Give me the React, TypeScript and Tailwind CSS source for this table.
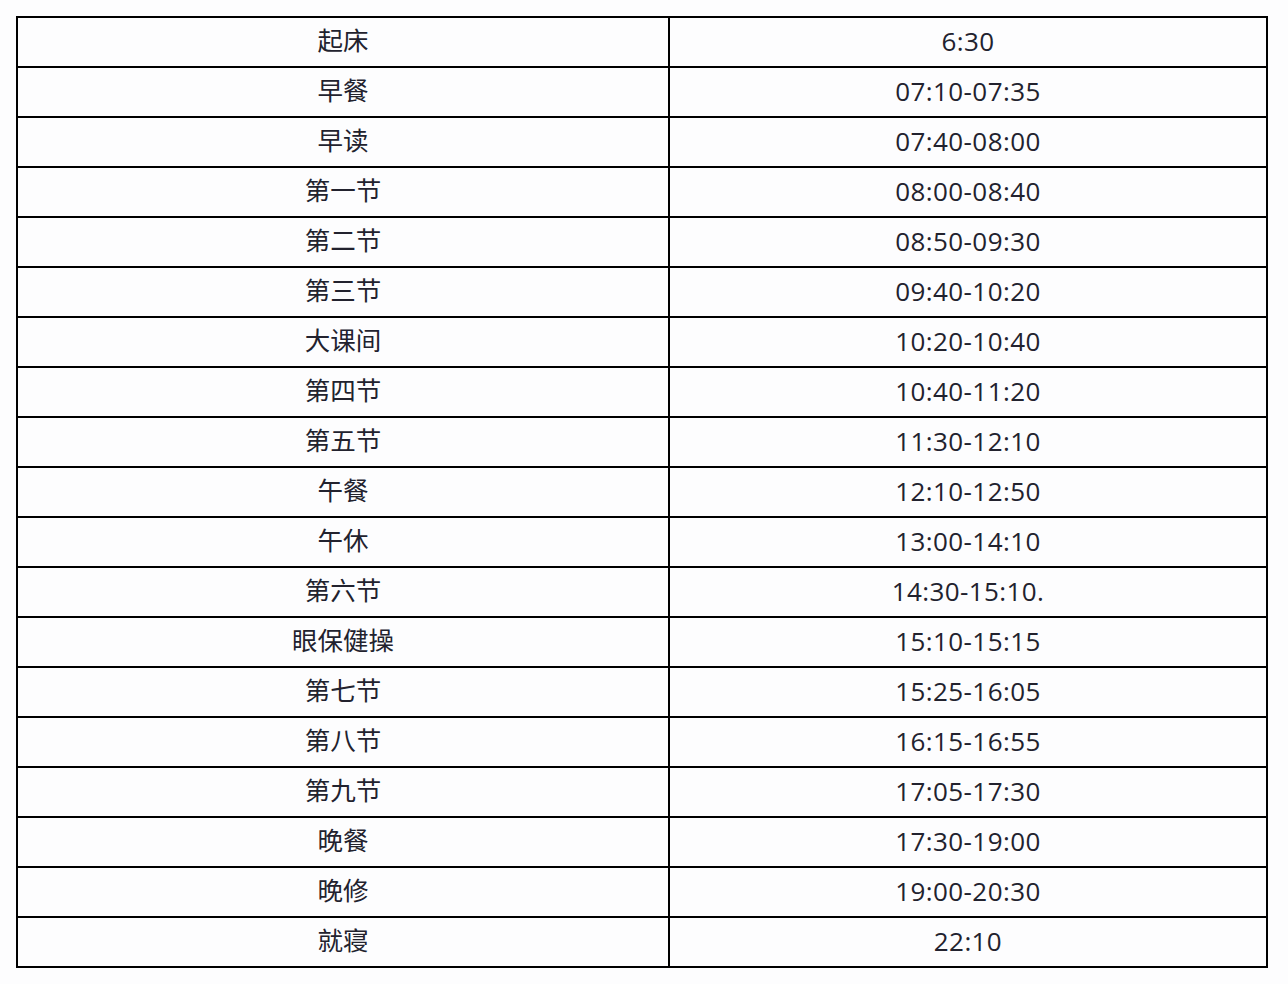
const rows: [string, string][] = [
  ["起床", "6:30"],
  ["早餐", "07:10-07:35"],
  ["早读", "07:40-08:00"],
  ["第一节", "08:00-08:40"],
  ["第二节", "08:50-09:30"],
  ["第三节", "09:40-10:20"],
  ["大课间", "10:20-10:40"],
  ["第四节", "10:40-11:20"],
  ["第五节", "11:30-12:10"],
  ["午餐", "12:10-12:50"],
  ["午休", "13:00-14:10"],
  ["第六节", "14:30-15:10."],
  ["眼保健操", "15:10-15:15"],
  ["第七节", "15:25-16:05"],
  ["第八节", "16:15-16:55"],
  ["第九节", "17:05-17:30"],
  ["晚餐", "17:30-19:00"],
  ["晚修", "19:00-20:30"],
  ["就寝", "22:10"],
];

const App = () => {
  return (
    <div className="min-h-[984px] w-[1288px] bg-[#fdfdfe] pt-[16px] pl-[16px]">
      <table
        className="w-[1252px] border-collapse border-2 border-black text-[#22222e]"
        style={{ fontFamily: '"Open Sans", "Noto Sans CJK SC", sans-serif' }}
      >
        <tbody>
          {rows.map(([name, time]) => (
            <tr key={name} className="h-[50px]">
              <td className="w-[652px] border-2 border-black p-0 pb-[2px] text-center text-[25.5px] leading-none">
                {name}
              </td>
              <td className="border-2 border-black p-0 pb-[2px] text-center text-[26px] leading-none tracking-[0.4px]">
                {time}
              </td>
            </tr>
          ))}
        </tbody>
      </table>
    </div>
  );
};

export default App;
